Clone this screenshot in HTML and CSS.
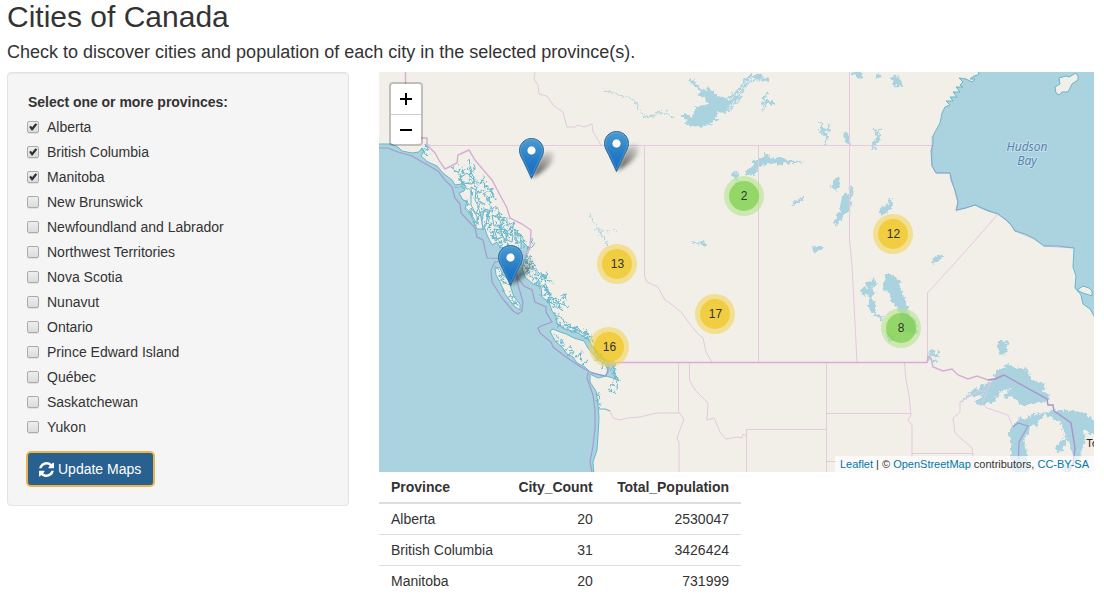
FILE: index.html
```
<!DOCTYPE html>
<html lang="en">
<head>
<meta charset="utf-8">
<title>Cities of Canada</title>
<link rel="stylesheet" href="styles.css">
</head>
<body>
<h2 class="title">Cities of Canada</h2>
<h4 class="subtitle">Check to discover cities and population of each city in the selected province(s).</h4>
<div class="row">
  <form class="well">
    <div class="group-label">Select one or more provinces:</div>
    <div class="options">
      <label class="option"><input type="checkbox" checked>Alberta</label>
      <label class="option"><input type="checkbox" checked>British Columbia</label>
      <label class="option"><input type="checkbox" checked>Manitoba</label>
      <label class="option"><input type="checkbox">New Brunswick</label>
      <label class="option"><input type="checkbox">Newfoundland and Labrador</label>
      <label class="option"><input type="checkbox">Northwest Territories</label>
      <label class="option"><input type="checkbox">Nova Scotia</label>
      <label class="option"><input type="checkbox">Nunavut</label>
      <label class="option"><input type="checkbox">Ontario</label>
      <label class="option"><input type="checkbox">Prince Edward Island</label>
      <label class="option"><input type="checkbox">Québec</label>
      <label class="option"><input type="checkbox">Saskatchewan</label>
      <label class="option"><input type="checkbox">Yukon</label>
    </div>
    <button class="update" type="button">
      <svg class="refresh" viewBox="0 0 1536 1536"><path fill="#fff" d="M1511 928q0 5-1 7-64 268-268 434.500T764 1536q-146 0-282.500-55T238 1324l-129 129q-19 19-45 19t-45-19-19-45V960q0-26 19-45t45-19h448q26 0 45 19t19 45-19 45l-137 137q71 66 161 102t187 36q134 0 250-65t186-179q11-17 53-117 8-23 30-23h192q13 0 22.500 9.500t9.500 22.500zM1536 128v448q0 26-19 45t-45 19h-448q-26 0-45-19t-19-45 19-45l138-138Q969 256 768 256q-134 0-250 65T332 500q-11 17-53 117-8 23-30 23H50q-13 0-22.500-9.500T18 608v-7q65-268 270-434.500T768 0q146 0 284 55.500T1297 212l130-129q19-19 45-19t45 19 19 45z"/></svg>
      <span>Update Maps</span>
    </button>
  </form>
  <main class="main">
    <div class="map">
      <svg class="tiles" viewBox="379 72 715 400">
        <defs>
          <filter id="rough" filterUnits="userSpaceOnUse" x="379" y="72" width="715" height="400"><feTurbulence type="fractalNoise" baseFrequency=".3" numOctaves="2" seed="4"/><feDisplacementMap in="SourceGraphic" scale="7" xChannelSelector="R" yChannelSelector="G"/></filter>
        </defs>
        <rect x="379" y="72" width="715" height="400" fill="#f2efe9"/>
        <!-- Pacific Ocean -->
        <path class="coast" d="M376 144 391 144 398 147 402 151 412 153 419 152 422 148 424 151 421 156 428 162 437 166 443 173 452 180 455 185 462 184 466 186 464 191 459 193 463 200 467 201 465 209 470 213 473 220 477 229 483 229 482 222 480 213 486 209 490 211 487 219 484 226 487 235 492 245 497 242 500 247 505 248 510 254 514 246 521 249 521 240 528 247 525 259 522 268 525 277 533 284 541 287 542 297 549 302 552 311 556 316 557 324 565 329 576 332 588 339 592 346 599 354 606 360 613 363 615 374 619 381 613 378 606 376 598 378 590 374 590 382 596 391 598 404 599 418 598 436 597 450 593 462 594 476 376 476Z"/>
        <!-- Islands -->
        <path class="island" d="M495 267 500 268 503 275 510 281 511 288 514 297 520 304 520 310 514 306 509 299 505 294 500 282 496 275ZM550 331 553 329 560 332 566 334 574 338 584 341 588 348 592 353 598 360 604 363 608 369 606 376 597 374 590 372 585 367 577 363 573 357 567 354 562 347 555 341ZM471 187 476 190 475 200 479 207 476 214 471 205ZM460 178 467 173 474 180 472 184 462 183ZM471 208 477 216 477 224 471 214ZM484 210 488 213 486 225 483 230 482 221ZM492 215 499 218 502 226 494 226ZM494 229 501 230 503 237 497 239ZM506 233 513 235 512 242 507 240ZM515 232 521 237 520 243 515 240Z"/>
        <g class="inlets" filter="url(#rough)">
          <path d="M422 149 427 155 430 154M424 147 427 144 426 150 429 148M451 167 457 171 461 177 463 184 470 182 478 183M458 172 461 167 463 174M458 181 463 175 465 169M469 159 471 171 474 180 477 190 479 207 478 226M466 167 472 173 475 169 474 163M471 173 469 180M456 187 465 188 472 190 473 197M474 177 479 184 482 180 486 185 484 195 490 202 492 213M481 184 484 176 485 185 490 190 494 196M482 190 477 195 480 202 485 204M485 187 493 190 489 200M487 201 492 195 497 200M488 211 496 207 500 213 498 218 507 220 508 227M490 210 487 217 491 223 488 231 494 233 492 238M482 210 488 212 489 222 482 228M493 216 499 216 504 222 499 226 504 231 511 229 512 236M496 222 501 228 496 230 503 237 508 235 509 242M499 232 503 227 505 233 513 227 515 232 519 237M491 237 497 240 502 241 500 249M498 244 505 238 508 247 513 249M511 236 512 226 518 233 523 238 525 249M505 226 512 222 514 227M516 237 517 245 521 252M468 199 466 206 470 211 473 218 475 225"/>
          <path d="M532 238 533 245 528 251 526 262 532 269 539 276M528 254 531 261 535 268M523 260 530 264 528 270 522 273M524 265 531 274 540 282 539 289M526 272 532 278 537 285M532 265 538 272 545 279 547 290M541 280 548 273 545 281 553 282M539 278 545 275M536 283 543 286 547 293 541 295M543 286 551 295 549 302 555 307M545 294 552 298 558 303 565 294 566 301M550 292 548 301 555 304 563 303 569 308M550 303 555 298 560 306M552 309 559 306 562 312M553 314 560 314M554 320 560 317 564 322 571 326M558 326 567 324 576 332M557 321 563 328 569 325 572 330M566 329 575 327 578 333M571 333 577 328 584 334 587 329M577 326 581 334 589 334M582 337 588 332 589 342M584 340 592 336 591 345 597 350"/>
          <path d="M497 268 499 275 504 285M502 273 504 282 512 286M502 287 506 292M510 291 509 297 514 296 511 301 518 304M553 333 558 337 557 342 564 340M562 341 564 345 560 347M565 350 571 346 572 354M568 356 575 351M576 357 582 352 580 361M583 365 588 361M592 347 598 354 597 360M598 353 604 359 602 369M606 364 614 362 615 373M607 370 610 365 617 369M611 369 616 376 613 382 610 389M614 373 618 380 617 388 614 393M608 389 612 392M599 393 598 402 601 407"/>
        </g>
        <path class="river" d="M598 409 605 409 610 411"/>
        <!-- Hudson Bay -->
        <path class="coast" d="M980 69 978 75 974 76 970 79 975 79 972 82 966 79 959 78 963 82 960 85 963 87 956 87 960 92 953 92 957 97 950 97 953 101 946 101 950 105 945 107 942 113 940 123 935 132 933 136 933 144 931 151 932 166 936 173 950 173 951 180 955 190 958 202 956 210 966 208 975 205 981 208 988 211 998 214 1006 220 1011 225 1015 231 1025 234 1035 239 1044 246 1058 246 1074 248 1073 267 1076 276 1075 288 1081 295 1083 304 1090 309 1097 321 1097 69Z"/>
        <path class="island" d="M1055 87 1060 84 1059 78 1066 76 1069 77 1076 73 1078 76 1078 80 1072 84 1068 92 1062 92 1059 95 1056 93ZM1077 290 1083 286 1089 288 1092 291 1092 296 1083 293Z"/>
        <!-- Lakes -->
        <g filter="url(#rough)">
        <path class="lake" d="M689 79 694 81 698 86 702 88 707 92 708 87 712 90 716 95 723 98 729 97 735 92 742 85 744 79 750 75 760 75 768 79 770 82 758 80 749 83 745 90 740 100 734 107 728 113 717 112 717 121 705 125 701 127 690 126 684 123 687 120 681 116 684 114 692 117 695 113 695 107 707 104 704 97 697 95 701 93 694 85 690 83Z"/>
        <path fill="none" stroke="#f2efe9" stroke-width="1.1" d="M726 101 733 98 742 89 748 80 764 78M729 106 736 102 743 92 749 84M735 103 728 111"/>
        <path class="lake" d="M745 174 748 169 753 166 753 161 762 158 765 154 770 155 769 159 778 157 784 158 788 161 795 160 805 162 795 163 785 163 780 165 775 163 768 165 760 166 753 176ZM730 174 734 172 739 173 737 176 739 182 736 183 734 178ZM689 242 704 241 706 246 698 244ZM791 205 796 200 800 199 803 196 803 201 799 203 792 206ZM829 186 832 186 836 176 840 180 841 184 837 190ZM842 196 848 193 850 186 854 191 852 195 850 210 843 217 836 226 834 222 838 214 840 210ZM812 246 817 248 820 245 823 248 817 252 813 252ZM843 135 846 130 850 139 851 145 846 143ZM850 71 856 76 861 80 862 72ZM874 78 879 73 882 76 876 79ZM891 77 898 75 902 85 904 87 894 86ZM878 211 883 207 889 203 888 198 892 199 893 206 889 211 881 216ZM932 260 938 255 945 256 938 261 932 264Z"/>
        <path class="lake" d="M885 274 891 274 900 281 902 291 907 306 911 317 916 322 918 334 906 333 901 323 899 309 892 302 891 294 883 289ZM860 288 868 289 864 282 870 280 875 279 877 285 871 287 876 292 871 297 875 305 875 313 883 316 882 320 874 316 869 308 869 297 861 293ZM885 330 893 337 894 342 888 341ZM998 342 1002 340 1008 343 1008 349 1005 355 998 353 997 347Z"/>
        <path class="lake" d="M960 403 966 396 975 389 986 384 993 380 997 370 1005 367 1008 363 1013 368 1025 367 1032 380 1042 383 1045 384 1043 392 1049 395 1050 402 1042 401 1030 405 1020 405 1013 397 1003 398 1011 388 999 393 994 402 979 405 975 402 983 395 970 397ZM1008 434 1015 422 1020 418 1025 419 1032 414 1042 413 1045 415 1038 422 1037 428 1032 424 1028 433 1024 438 1027 452 1028 476 1012 476 1011 457 1011 440ZM1042 413 1055 410 1070 410 1087 414 1096 424 1097 435 1091 434 1082 429 1086 438 1081 449 1080 458 1069 469 1074 460 1071 446 1068 438 1063 451 1057 452 1055 446 1065 438 1062 424 1050 417ZM1062 467 1069 461 1071 467 1065 476Z"/>
        </g>
        <g class="streams" filter="url(#rough)">
          <path d="M768 92 764 97 767 103 763 110M761 105 766 101 763 98M766 103 774 103M820 122 824 132 828 139M821 129 829 131 828 123M822 127 820 132 827 136 825 145M882 127 878 131 880 139 874 144 876 150M874 129 879 137 873 143 872 150M928 362 932 350 936 358 940 351M927 354 940 356M930 360 937 362"/>
          <path class="thin" d="M605 90 615 94 630 98 637 103 638 110 645 116 652 117 659 112 665 114 673 117M664 108 667 112M588 213 595 223 600 233 609 247M594 228 600 230 608 231 617 230"/>
        </g>
        <!-- Borders -->
        <path class="province" d="M427 145.500H932M535 72 534 79 538 85 539 94 547 96 554 106 563 112 567 127 575 127 578 125 584 127 592 124 593 132 601 145M644.500 145V276L647 282 658 287 665 300 671 304 682 313 689 323 698 334 703 338 706 352 712 362M758.500 145V362M849.500 72V240L852 265 857 362M927.500 356V293L963 254 998 214M678.500 363V412L684 419 677 438 679 443V472M689.500 363V380L695 390 708 403 707 420 714 418 720 432 726 439 737 437 742 438 743 434 746 436M746.500 472V429.500H826.500M826.500 363V472M826 413.500H911M826 461.500H850M904.500 363 906 380 909 395 911 415 908 420 912 425V472M911 453.500H972M610 411 613 418 620 420 627 418 640 417 657 413H679M960 402V412L953 418 955 433 972 448 973 457M982 403 987 408 1008 415 1013 427M960 402 978 391H986M982 403 992 380"/>
        <path class="country" d="M405.500 72V138H427V145L435 153 440 162 445 169 457 163 458 155 469 150 475 160 480 166 492 180 500 195 507 208 510 218 522 224 531 230 530 248 522 258M608 362.500H927L928 356 931 358 933 367 943 371 952 369 958 375 968 379 977 376 988 380 995 379 1004 375"/>
        <path class="country deep" d="M988 380 995 379 1004 375 1047 399 1048 405 1053 405 1054 411 1060 415 1071 423 1075 448 1073 465 1068 472"/>
        <path class="marine" d="M379 148 388 148 398 152 412 156 438 171 445 180 452 187 455 198 460 204 461 213 475 228 477 237 483 240 487 258 522 259M491 270 495 262 508 261 516 269 518 285 523 302 522 311 518 314 513 311 502 298 492 282ZM518 278 524 286 532 290 535 302 546 307 546 312 552 322 541 326 538 328 540 333 551 342 553 347 566 357 581 367 592 373 605 376 608 372V363M588 372 587 378 593 395 595 410 595 428 593 446 590 462 592 472M1013 427 1018 423 1028 426 1019 442 1018 472"/>
        <path class="marine bay" d="M932 136V166L936 173H950L958 203 956 211 975 205 998 214 1009 222 1015 231 1032 238 1044 246 1074 248"/>
        <text class="water-label" x="1027" y="151">Hudson</text>
        <text class="water-label" x="1027" y="165">Bay</text>
        <text class="place" x="1086.500" y="447">To</text>
        <!-- Clusters -->
        <g class="cluster">
          <g transform="translate(744 196)"><circle r="20" class="small-ring"/><circle r="15" class="small-core"/><text y="4">2</text></g>
          <g transform="translate(901 328)"><circle r="20" class="small-ring"/><circle r="15" class="small-core"/><text y="4">8</text></g>
          <g transform="translate(617 264)"><circle r="20" class="medium-ring"/><circle r="15" class="medium-core"/><text x=".5" y="4">13</text></g>
          <g transform="translate(893 234)"><circle r="20" class="medium-ring"/><circle r="15" class="medium-core"/><text x=".5" y="4">12</text></g>
          <g transform="translate(715 314)"><circle r="20" class="medium-ring"/><circle r="15" class="medium-core"/><text x=".5" y="4">17</text></g>
          <g transform="translate(609 347)"><circle r="20" class="medium-ring"/><circle r="15" class="medium-core"/><text x=".5" y="4">16</text></g>
        </g>
        <!-- Pins -->
        <defs>
          <linearGradient id="pinFill" x2="0" y2="1"><stop stop-color="#4a9bd3"/><stop offset=".6" stop-color="#2479c5"/><stop offset="1" stop-color="#126fc6"/></linearGradient>
          <linearGradient id="shadowFill" gradientUnits="userSpaceOnUse" x1="12" y1="40" x2="35" y2="16"><stop stop-color="#000" stop-opacity=".75"/><stop offset="1" stop-color="#000" stop-opacity=".08"/></linearGradient>
          <filter id="soft" x="-40%" y="-40%" width="180%" height="180%"><feGaussianBlur stdDeviation="1.900"/></filter>
          <g id="pin">
            <path d="M12.500 40 22 19Q31 9 35 16 36 28 12.500 40Z" fill="url(#shadowFill)" filter="url(#soft)"/>
            <path d="M12.500.5C5.700.5.500 5.900.500 12.500c0 4 2 7 4 11l8 17 8-17c2-4 4-7 4-11C24.500 5.900 19.300.5 12.500.5Z" fill="url(#pinFill)" stroke="#2e6c97"/>
            <path d="M12.500 1.600C6.400 1.600 1.600 6.500 1.600 12.500c0 3.700 1.900 6.600 3.900 10.500l7 15 7-15c2-3.900 3.900-6.800 3.900-10.500 0-6-4.800-10.900-10.900-10.900Z" fill="none" stroke="#fff" stroke-opacity=".15"/>
            <circle cx="12.500" cy="12.500" r="4.400" fill="#fff" stroke="#2e6c97" stroke-width=".5"/>
          </g>
        </defs>
        <use href="#pin" x="519" y="138"/>
        <use href="#pin" x="604" y="131"/>
        <use href="#pin" x="498" y="245"/>
      </svg>
      <div class="zoom">
        <div class="zoom-btn"><svg viewBox="0 0 30 30"><path d="M9 15H21M15 9V21"/></svg></div>
        <div class="zoom-btn"><svg viewBox="0 0 30 30"><path d="M9 15H21"/></svg></div>
      </div>
      <div class="attribution"><a>Leaflet</a> | © <a>OpenStreetMap</a> contributors, <a>CC-BY-SA</a></div>
    </div>
    <table class="table">
      <thead><tr><th>Province</th><th class="num count">City_Count</th><th class="num">Total_Population</th></tr></thead>
      <tbody>
        <tr><td>Alberta</td><td class="num count">20</td><td class="num">2530047</td></tr>
        <tr><td>British Columbia</td><td class="num count">31</td><td class="num">3426424</td></tr>
        <tr><td>Manitoba</td><td class="num count">20</td><td class="num">731999</td></tr>
      </tbody>
    </table>
  </main>
</div>
</body>
</html>
```
FILE: styles.css
```
* { box-sizing: border-box; }
body {
  margin: 0;
  padding: 0 10px 0 7px;
  height: 613px;
  overflow: hidden;
  background: #fff;
  color: #333;
  font: 14px/20px "Liberation Sans", Arial, sans-serif;
}
.title { margin: 0 0 9px; font-size: 30px; line-height: 33px; font-weight: 400; }
.subtitle { margin: 0 0 10px; font-size: 18px; line-height: 20px; font-weight: 400; }
.row { display: flex; align-items: flex-start; gap: 30px; }
.well {
  width: 342px;
  height: 434px;
  padding: 19px;
  border: 1px solid #e3e3e3;
  border-radius: 4px;
  background: #f5f5f5;
  box-shadow: inset 0 1px 1px rgba(0, 0, 0, .05);
}
.group-label { padding-left: 1px; font-weight: 700; letter-spacing: -.03px; }
.options { display: flex; flex-direction: column; gap: 5px; padding-top: 5px; }
.option { display: flex; align-items: center; gap: 8px; height: 20px; }
.option input {
  appearance: none;
  width: 12px;
  height: 12px;
  margin: 0;
  border: 1px solid #ababab;
  border-radius: 2px;
  background: linear-gradient(#eee, #dcdcdc);
  box-shadow: 0 1px 0 rgba(0, 0, 0, .08);
}
.option input:checked::after {
  content: "";
  display: block;
  width: 10px;
  height: 10px;
  background: #333;
  clip-path: polygon(12% 50%, 28% 38%, 42% 52%, 74% 12%, 93% 24%, 46% 85%, 36% 85%);
}
.update {
  display: flex;
  align-items: center;
  gap: 4px;
  width: 127px;
  height: 34px;
  margin: 15px 0 0;
  padding: 0 11px;
  border: 1px solid #204d74;
  border-radius: 4px;
  outline: 2px solid #eab54c;
  outline-offset: -1px;
  background: #286090;
  color: #fff;
  font: 14px/20px "Liberation Sans", Arial, sans-serif;
  white-space: nowrap;
}
.refresh { width: 15px; height: 15px; flex: none; }
.main { width: 715px; }
.map { position: relative; height: 400px; overflow: hidden; }
.tiles { display: block; width: 715px; height: 400px; }
.coast { fill: #aad3df; stroke: #68b6ca; stroke-width: 1; }
.island { fill: #f2efe9; stroke: #68b6ca; stroke-width: 1; }
.inlets, .river { fill: none; stroke: #6bb9cc; stroke-width: 1.200; stroke-linejoin: round; }
.lake { fill: #aad3df; }
.streams { fill: none; stroke: #aad3df; stroke-width: 2; }
.thin { stroke-width: 1; }
.province { fill: none; stroke: #e4c9df; stroke-width: 1; }
.country { fill: none; stroke: #d9acd5; stroke-width: 1.400; }
.deep { stroke: #ac92cb; }
.marine { fill: none; stroke: #a192c9; stroke-width: 1.200; stroke-opacity: .85; }
.bay { stroke-width: .8; stroke-opacity: .6; }
.water-label {
  fill: #5580b0;
  stroke: #d5e7ef;
  stroke-width: 2px;
  stroke-opacity: .6;
  paint-order: stroke;
  font: italic 12px "Open Sans", "Noto Sans", sans-serif;
  text-anchor: middle;
}
.place { font: 11px "Noto Sans", sans-serif; fill: #222; }
.cluster text { font: 12px "Liberation Sans", Arial, sans-serif; fill: #333; text-anchor: middle; }
.small-ring { fill: rgba(181, 226, 140, .6); }
.small-core { fill: rgba(110, 204, 57, .6); }
.medium-ring { fill: rgba(241, 211, 87, .6); }
.medium-core { fill: rgba(240, 194, 12, .6); }
.zoom {
  position: absolute;
  left: 10px;
  top: 10px;
  border: 2px solid rgba(0, 0, 0, .2);
  border-radius: 4px;
  background: #fff;
  background-clip: padding-box;
}
.zoom-btn { width: 30px; height: 30px; }
.zoom-btn + .zoom-btn { border-top: 1px solid #ccc; }
.zoom-btn svg { display: block; width: 30px; height: 30px; fill: none; stroke: #000; stroke-width: 2; }
.attribution {
  position: absolute;
  right: 0;
  bottom: 0;
  padding: 0 5px;
  background: rgba(255, 255, 255, .7);
  font-size: 11px;
  line-height: 16px;
  white-space: nowrap;
}
.attribution a { color: #0078a8; }
.table { width: 362px; border-collapse: collapse; }
.table th, .table td { height: 31px; padding: 5px 12px; text-align: left; border-top: 1px solid #ddd; }
.table thead th { border-top: 0; border-bottom: 2px solid #ddd; }
.table .num { text-align: right; }
.table .count { padding-right: 11.500px; }
.table th.num { letter-spacing: -.04px; }
```
